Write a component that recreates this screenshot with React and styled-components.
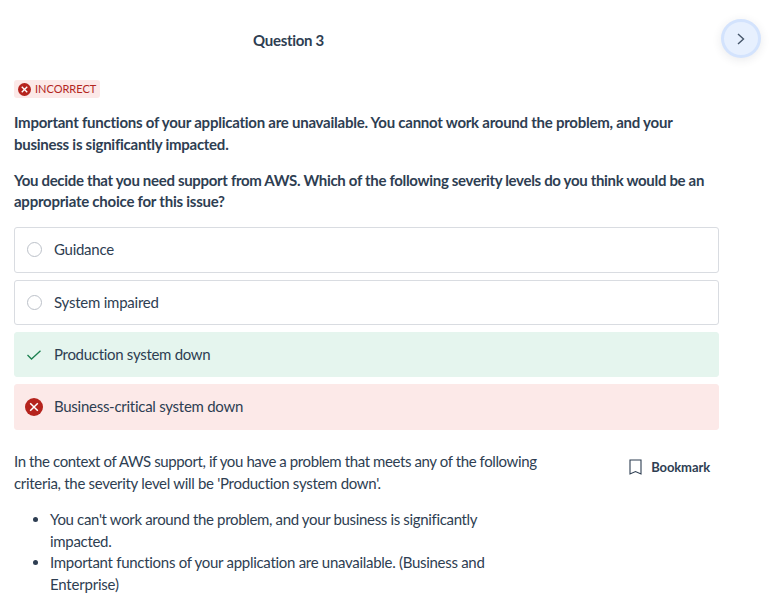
import React from 'react';
import styled, { createGlobalStyle } from 'styled-components';

const Global = createGlobalStyle`
  * { box-sizing: border-box; }
  body { margin: 0; background: #fff; color: #2e3e52; font: 400 15px/21.6px Lato, "Liberation Sans", sans-serif; overflow: hidden; }
`;
const Page = styled.main`
  width: 775px; height: 609px; padding: 19px 14px 0; overflow: hidden;
`;
const Header = styled.header`
  display: flex; align-items: center; justify-content: flex-end; gap: 397px; height: 39px;
`;
const Title = styled.h1`
  margin: 3px 0 0; font-size: 15px; line-height: 22px; font-weight: 700; white-space: nowrap; letter-spacing: -0.3px;
`;
const NextButton = styled.button`
  width: 40px; height: 39px; padding: 0; border: 3px solid #d3e3fd; border-radius: 50%; background: #e7f0fe;
  box-shadow: 0 2px 10px rgba(40, 50, 70, 0.1);
  display: flex; align-items: center; justify-content: center; flex: none; color: #46566a;
`;
const Badge = styled.div`
  display: flex; width: fit-content; align-items: center; gap: 4px; height: 18px; margin-top: 22px; padding: 0 4px;
  border-radius: 3px; background: #fce9e8; color: #b3261e; font-size: 11px; line-height: 18px;
`;
const Prompt = styled.div`
  margin-top: 14px; font-weight: 700;
  p { margin: 0 0 14.4px; }
`;
const Line = styled.span`
  display: block; white-space: nowrap; letter-spacing: ${p => p.$track}px;
`;
const Options = styled.div`
  display: grid; gap: 7.2px; width: 705px; margin-top: 14.6px;
`;
const Option = styled.div`
  display: flex; align-items: center; gap: 10px; height: 45.2px; padding-left: 9px; border-radius: 3px;
  background: ${p => p.$bg || '#fff'}; border: 1px solid ${p => p.$bg || '#d9dce1'}; letter-spacing: ${p => p.$track || -0.27}px;
`;
const IconBox = styled.span`
  width: 20px; height: 20px; display: flex; align-items: center; justify-content: center;
`;
const Radio = styled.span`
  width: 15px; height: 15px; border: 1px solid #bcc1c9; border-radius: 50%;
`;
const Footer = styled.section`
  display: flex; justify-content: space-between; align-items: flex-start; width: 705px; margin-top: 21.8px; padding-right: 9px;
`;
const Explanation = styled.div`
  p { margin: 0; }
  ul { margin: 14.4px 0 0; padding-left: 36px; }
`;
const Bookmark = styled.button`
  display: flex; align-items: center; gap: 9px; height: 22px; margin-top: 5px; padding: 0; border: 0; background: none;
  color: inherit; font: 700 13px/22px Lato, sans-serif; letter-spacing: -0.1px;
`;

function Wrong({ size, stroke = 1.3 }) {
  return <svg width={size} height={size} viewBox="0 0 18 18"><circle cx="9" cy="9" r="9" fill="#b5231d" /><path d="M5.200 5.200l7.600 7.600M12.800 5.200l-7.600 7.600" stroke="#fff" strokeWidth={stroke} fill="none" /></svg>;
}

export default function App() {
  return <Page><Global />
    <Header><Title>Question 3</Title>
      <NextButton aria-label="Next"><svg width="10" height="14" viewBox="0 0 10 14" fill="none" stroke="currentColor" strokeWidth="1.4"><path d="M2 2l5.500 5-5.500 5" /></svg></NextButton>
    </Header>
    <Badge><Wrong size={13} stroke={1.9} />INCORRECT</Badge>
    <Prompt>
      <p><Line $track={-0.245}>Important functions of your application are unavailable. You cannot work around the problem, and your</Line>
        <Line $track={-0.26}>business is significantly impacted.</Line></p>
      <p><Line $track={-0.32}>You decide that you need support from AWS. Which of the following severity levels do you think would be an</Line>
        <Line $track={-0.24}>appropriate choice for this issue?</Line></p>
    </Prompt>
    <Options>
      <Option><IconBox><Radio /></IconBox>Guidance</Option>
      <Option $track={-0.23}><IconBox><Radio /></IconBox>System impaired</Option>
      <Option $bg="#e5f5ee" $track={-0.3}><IconBox><svg width="16" height="12" viewBox="0 0 16 12" fill="none" stroke="#1c8050" strokeWidth="1.3"><path d="M1.500 6l4 4L14.500 1.800" /></svg></IconBox>Production system down</Option>
      <Option $bg="#fce9e8"><IconBox><Wrong size={18} stroke={1.5} /></IconBox>Business-critical system down</Option>
    </Options>
    <Footer>
      <Explanation>
        <p><Line $track={-0.4}>In the context of AWS support, if you have a problem that meets any of the following</Line>
          <Line $track={-0.3}>criteria, the severity level will be 'Production system down'.</Line></p>
        <ul><li><Line $track={-0.34}>You can't work around the problem, and your business is significantly</Line><Line $track={-0.3}>impacted.</Line></li>
          <li><Line $track={-0.29}>Important functions of your application are unavailable. (Business and</Line><Line $track={-0.2}>Enterprise)</Line></li></ul>
      </Explanation>
      <Bookmark><svg width="13" height="16" viewBox="0 0 13 16" fill="none" stroke="currentColor" strokeWidth="1.1"><path d="M1 1h11v14L6.500 12.500 1 15z" /></svg>Bookmark</Bookmark>
    </Footer>
  </Page>;
}
